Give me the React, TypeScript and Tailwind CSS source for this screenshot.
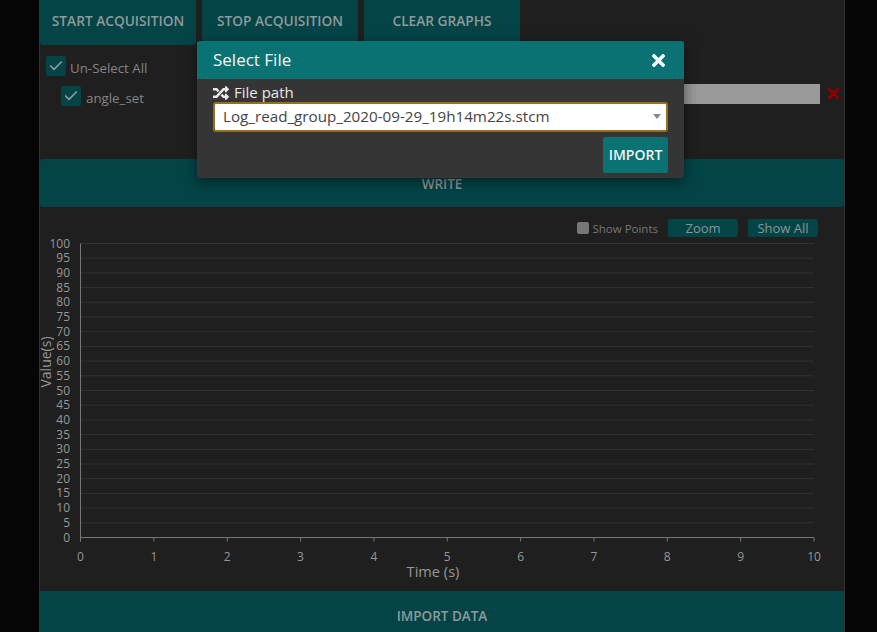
import React from "react";
import { FaRandom, FaTimes } from "react-icons/fa";
import { Check } from "lucide-react";

const font = "font-['Open_Sans','Noto_Sans',sans-serif]";

const yTicks = Array.from({ length: 21 }, (_, i) => i * 5);
const xTicks = Array.from({ length: 11 }, (_, i) => i);
const yPos = (v: number) => 537.5 - 238 - v * 2.94;
const xPos = (v: number) => 40.5 + v * 73.35;

function TopButton({ label }: { label: string }) {
  return (
    <button className="h-[45px] w-[156px] rounded-b-[3px] bg-[#044447] pb-[2px] text-[13.7px] font-semibold text-[#8f9a9a]">
      {label}
    </button>
  );
}

function Tick() {
  return (
    <span className="flex size-5 shrink-0 items-center justify-center rounded-[2px] bg-[#044447]">
      <Check className="size-4 text-[#8c9a9a]" strokeWidth={2.5} />
    </span>
  );
}

function Chart() {
  return (
    <svg width="804" height="347" className="block overflow-visible" style={{ fontFamily: "'Open Sans', sans-serif" }}>
      {yTicks.map((v) => (
        <g key={v}>
          {v > 0 && <line x1="40.5" x2="774" y1={yPos(v)} y2={yPos(v)} stroke="#323232" />}
          <text x="30" y={yPos(v) + 4} textAnchor="end" fontSize="12" fill="#979797">
            {v}
          </text>
        </g>
      ))}
      <line x1="40.5" x2="40.5" y1={yPos(100)} y2={yPos(0) + 4} stroke="#777" />
      <line x1="40.5" x2="774" y1={yPos(0)} y2={yPos(0)} stroke="#777" />
      {xTicks.map((v) => (
        <g key={v}>
          <line x1={xPos(v)} x2={xPos(v)} y1={yPos(0)} y2={yPos(0) + 4} stroke="#777" />
          <text x={xPos(v)} y="323" textAnchor="middle" fontSize="12" fill="#979797">
            {v}
          </text>
        </g>
      ))}
      <text x="393" y="339" textAnchor="middle" fontSize="14.6" fill="#979797">
        Time (s)
      </text>
      <text transform="translate(11 124) rotate(-90)" textAnchor="middle" fontSize="14" fill="#979797">
        Value(s)
      </text>
    </svg>
  );
}

export default function App() {
  return (
    <div className={`relative h-[632px] w-[877px] overflow-hidden bg-[#060606] ${font}`}>
      <main className="ml-[39px] h-full w-[806px] border-x border-[#333] bg-[#1f1f1f]">
        <div className="flex gap-[6px]">
          <TopButton label="START ACQUISITION" />
          <TopButton label="STOP ACQUISITION" />
          <TopButton label="CLEAR GRAPHS" />
        </div>

        <section className="h-[114px] pl-[6px] pr-[2px] pt-[11px] text-[13.3px] leading-5 text-[#858585]">
          <div className="flex h-5 items-start gap-[4px]">
            <Tick />
            <span className="pt-[2px]">Un-Select All</span>
          </div>
          <div className="mt-[10px] flex h-5 items-start gap-[5px] pl-[15px]">
            <Tick />
            <span className="pt-[2px]">angle_set</span>
            <div className="-mt-[2px] ml-[150px] h-5 flex-1 bg-[#9a9a9a]" />
            <FaTimes className="-mt-[1px] size-[17px] text-[#8b0000]" />
          </div>
        </section>

        <div className="flex h-12 items-center justify-center rounded-[3px] bg-[#044447] pt-[2px] text-[13.5px] font-semibold text-[#8f9a9a]">
          WRITE
        </div>

        <div className="flex h-[31px] items-end justify-end pr-[26px] text-[11.5px] text-[#777]">
          <div className="mb-[1px] flex items-center gap-[10px]">
            <div className="flex items-center gap-[3px]">
              <span className="size-3 rounded-[2px] bg-[#777]" />
              <span className="pt-[1px]">Show Points</span>
            </div>
            <button className="h-[18px] w-[70px] rounded-[2px] bg-[#044447] text-[13px] leading-[18px] text-[#8a9696]">Zoom</button>
            <button className="h-[18px] w-[70px] rounded-[2px] bg-[#044447] text-[13px] leading-[18px] text-[#8a9696]">Show All</button>
          </div>
        </div>

        <Chart />

        <div className="mt-[6px] flex h-[50px] items-center justify-center bg-[#044447] text-[13.5px] font-semibold text-[#8f9a9a]">
          IMPORT DATA
        </div>
      </main>

      <div className="absolute left-[197px] top-[41px] w-[487px] overflow-hidden rounded-[3px] bg-[#353535] shadow-[0_4px_14px_rgba(0,0,0,0.5)]">
        <div className="flex h-[38px] items-center justify-between bg-[#0b7274] pl-4 pr-4">
          <span className="text-[17px] text-[#f2f5f5]">Select File</span>
          <FaTimes className="size-[19px] text-white" />
        </div>
        <div className="px-4 pt-[4px] pb-[5px]">
          <div className="flex h-[19px] items-center gap-[5px] text-[15px] text-[#e8e8e8]">
            <FaRandom className="size-4" />
            <span>File path</span>
          </div>
          <div className="flex h-[30px] items-center justify-between rounded-[3px] border-2 border-[#96701f] bg-white pb-[1px] pl-2 pr-[5px] text-[15.2px] text-[#444]">
            <span>Log_read_group_2020-09-29_19h14m22s.stcm</span>
            <span className="size-0 border-x-[4px] border-t-[5px] border-x-transparent border-t-[#888]" />
          </div>
          <div className="mt-[5px] flex justify-end">
            <button className="h-9 w-[65px] rounded-[2px] bg-[#0b7274] pb-[2px] text-[14px] font-semibold text-[#f0f5f5]">IMPORT</button>
          </div>
        </div>
      </div>
    </div>
  );
}
